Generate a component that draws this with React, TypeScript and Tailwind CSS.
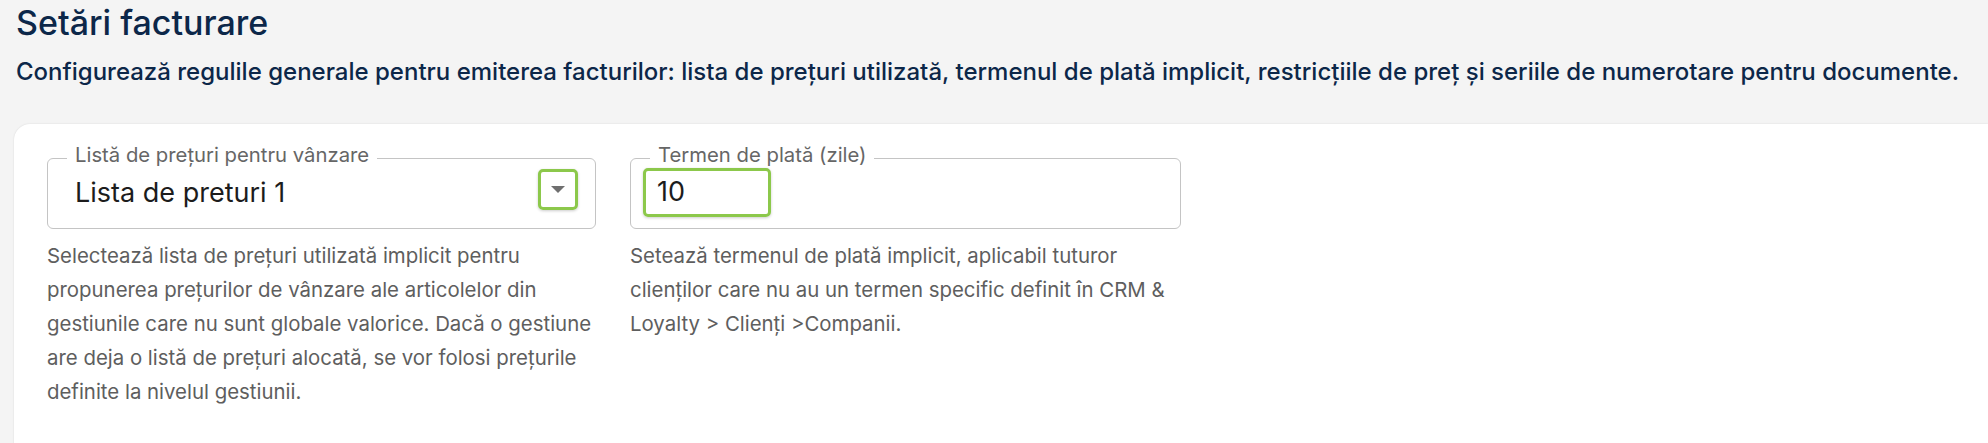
import { useState } from 'react';

interface FieldProps {
  label: string;
  helper: string;
  width: string;
  children: React.ReactNode;
}

function OutlinedField({ label, helper, width, children }: FieldProps) {
  return (
    <div className={`flex flex-col ${width}`}>
      <div className="relative h-[71px] border border-[#c4c4c4] rounded-[6px] flex items-center">
        <span className="absolute -top-[16px] left-[19px] px-[8px] bg-white text-[20.3px] leading-[24px] text-[#666666] whitespace-nowrap">
          {label}
        </span>
        {children}
      </div>
      <p className="mt-[10px] text-[20.4px] leading-[34px] text-[#5e5e5e]">{helper}</p>
    </div>
  );
}

export default function App() {
  const [priceList] = useState('Lista de preturi 1');
  const [term, setTerm] = useState('10');

  return (
    <div className="min-h-screen bg-[#f4f4f4] font-['Inter',sans-serif]">
      {/* Header */}
      <div className="pl-4 pt-[3px]">
        <h1 className="text-[34px] leading-[40px] font-medium text-[#0c2749]">Setări facturare</h1>
        <p className="mt-[14px] text-[24px] leading-[30px] font-medium text-[#0c2749]">
          Configurează regulile generale pentru emiterea facturilor: lista de prețuri utilizată, termenul de plată
          implicit, restricțiile de preț și seriile de numerotare pentru documente.
        </p>
      </div>

      {/* Card */}
      <div className="ml-[14px] mt-[37px] min-h-[330px] bg-white rounded-tl-2xl shadow-[0_0_2px_rgba(0,0,0,0.12)] pt-[34px] pl-[33px] flex gap-[34px]">
        <OutlinedField
          label="Listă de prețuri pentru vânzare"
          width="w-[549px]"
          helper="Selectează lista de prețuri utilizată implicit pentru propunerea prețurilor de vânzare ale articolelor din gestiunile care nu sunt globale valorice. Dacă o gestiune are deja o listă de prețuri alocată, se vor folosi prețurile definite la nivelul gestiunii."
        >
          <span className="flex-1 pl-[27px] text-[27px] text-[#1c1c1c]">{priceList}</span>
          <button className="mr-[17px] -mt-[8px] w-[40px] h-[41px] border-[3px] border-[#8cc84b] rounded-[5px] shadow-[0_1px_3px_rgba(0,0,0,0.2)] flex items-center justify-center">
            <svg width="14" height="8" viewBox="0 0 14 8">
              <path d="M0 0 L14 0 L7 7 Z" fill="#6f6f6f" />
            </svg>
          </button>
        </OutlinedField>

        <OutlinedField
          label="Termen de plată (zile)"
          width="w-[551px]"
          helper="Setează termenul de plată implicit, aplicabil tuturor clienților care nu au un termen specific definit în CRM & Loyalty > Clienți >Companii."
        >
          <div className="ml-[12px] -mt-[2px] w-[128px] h-[49px] border-[3px] border-[#8cc84b] rounded-[5px] shadow-[0_1px_3px_rgba(0,0,0,0.2)] flex items-center pl-[11px]">
            <input
              value={term}
              onChange={(e) => setTerm(e.target.value)}
              className="w-full bg-transparent outline-none text-[27px] text-[#1c1c1c]"
            />
          </div>
        </OutlinedField>
      </div>
    </div>
  );
}
